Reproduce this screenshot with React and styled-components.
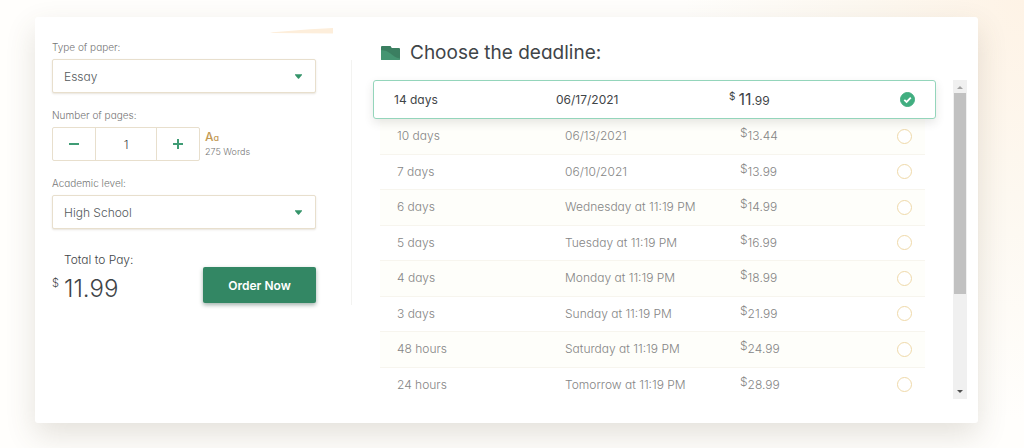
import React, { useState } from "react";
import styled, { createGlobalStyle, css } from "styled-components";

const GlobalStyle = createGlobalStyle`
  *, *::before, *::after { box-sizing: border-box; }
  body {
    margin: 0;
    min-height: 100vh;
    font-family: Inter, "Open Sans", sans-serif;
    font-feature-settings: "cv11" 1;
    font-weight: 300;
    color: #3f4548;
    background:
      radial-gradient(ellipse 340px 420px at 100% 0%, #fef3e6 0%, rgba(252, 246, 236, 0.7) 50%, rgba(253, 250, 244, 0) 100%),
      #fffefc;
  }
  button, input, select { font: inherit; font-feature-settings: inherit; color: inherit; }
`;

const Page = styled.main`
  padding: 17px 46px 25px 35px;
`;

const Card = styled.section`
  display: flex;
  align-items: flex-start;
  padding: 11px 11px 24px 17px;
  border-radius: 3px;
  background: #fff;
  box-shadow: 0 12px 30px rgba(90, 75, 50, 0.16);
`;

const OrderForm = styled.form`
  display: flex;
  flex: 0 0 282px;
  flex-direction: column;
`;

const Ribbon = styled.svg`
  display: block;
  align-self: flex-end;
  width: 64px;
  height: 6px;
`;

const Fields = styled.div`
  display: flex;
  flex-direction: column;
  gap: 15px;
  width: 264px;
  margin-top: 6px;
`;

const Field = styled.div`
  display: flex;
  flex-direction: column;
  gap: 5px;
`;

const FieldLabel = styled.label`
  font-size: 10px;
  line-height: 14px;
  color: #757575;
`;

const SelectBox = styled.div`
  display: grid;
  align-items: center;
  & > * { grid-area: 1 / 1; }
`;

const Select = styled.select`
  appearance: none;
  width: 100%;
  height: 34px;
  padding: 0 30px 0 11px;
  border: 1px solid #e8dfcd;
  border-radius: 2px;
  background: #fff;
  box-shadow: 0 1px 2px rgba(110, 85, 50, 0.16);
  font-size: 12px;
  color: #555a5c;
`;

const Caret = styled.svg`
  justify-self: end;
  width: 7px;
  height: 5px;
  margin-right: 14px;
  fill: #35946a;
  pointer-events: none;
`;

const PagesRow = styled.div`
  display: flex;
  gap: 5px;
`;

const Stepper = styled.div`
  display: flex;
  width: 148px;
  height: 34px;
  border: 1px solid #e8dfcd;
  border-radius: 2px;
`;

const StepButton = styled.button`
  display: grid;
  flex: 0 0 42px;
  place-items: center;
  padding: 0;
  border: 0;
  background: none;
  cursor: pointer;
  svg { width: 10px; height: 10px; fill: #3f9c75; }
`;

const PageCount = styled.input`
  flex: 1;
  min-width: 0;
  padding: 0;
  border: solid #e8dfcd;
  border-width: 0 1px;
  background: none;
  font-size: 12px;
  text-align: center;
`;

const WordCount = styled.div`
  padding-top: 3px;
  font-size: 9px;
  line-height: 14px;
  color: #757575;
`;

const TypeMark = styled.div`
  font-size: 12px;
  font-weight: 500;
  color: #c39a55;
  small { font-size: 9px; }
`;

const Checkout = styled.div`
  display: flex;
  align-items: flex-end;
  justify-content: space-between;
  width: 264px;
  margin-top: 22px;
`;

const TotalLabel = styled.div`
  padding: 0 0 6px 12px;
  font-size: 12px;
  line-height: 18px;
`;

const Total = styled.div`
  display: flex;
  gap: 5px;
  font-size: 24px;
  line-height: 28px;
  sup { font-size: 11px; line-height: 16px; }
`;

const OrderButton = styled.button`
  width: 113px;
  height: 36px;
  border: 0;
  border-radius: 2px;
  background: #338764;
  box-shadow: 0 2px 4px rgba(20, 60, 45, 0.4);
  color: #fff;
  font-size: 12px;
  font-weight: 600;
  cursor: pointer;
`;

const Divider = styled.div`
  flex: 0 0 1px;
  height: 245px;
  margin: 32px 21px 0 17px;
  background: #f3f3f1;
`;

const DeadlinePanel = styled.section`
  flex: 1;
  min-width: 0;
  padding-top: 12px;
`;

const Heading = styled.h2`
  display: flex;
  align-items: center;
  gap: 10px;
  margin: 0 0 14px 8px;
  font-size: 19px;
  line-height: 26px;
  font-weight: 400;
  svg { width: 19px; height: 14px; }
`;

const ScrollArea = styled.div`
  display: flex;
  gap: 17px;
  height: 319px;
`;

const DeadlineTable = styled.table`
  display: block;
  flex: 1;
  tbody {
    display: flex;
    flex-direction: column;
    height: 322px;
  }
`;

const DeadlineRow = styled.tr`
  display: grid;
  flex: 1;
  grid-template-columns: 168fr 175fr 172fr;
  align-items: center;
  margin: 0 11px 0 7px;
  padding: 0 13px 0 17px;
  border-bottom: 1px solid #f7f5ee;
  background: ${(p) => (p.$tinted ? "#fefefa" : "#fff")};
  font-size: 12px;
  line-height: 18px;
  color: #858585;
  &:last-child { border-bottom: 0; }

  ${(p) =>
    p.$selected &&
    css`
      z-index: 1;
      flex: 0 0 39px;
      grid-template-columns: 162fr 173fr 186fr;
      padding: 0 20px;
      margin: 0;
      border: 1px solid #94d5bb;
      border-radius: 3px;
      background: #fff;
      box-shadow: 0 4px 10px rgba(60, 60, 50, 0.12);
      color: #3f4548;
      font-weight: 400;
      &:last-child { border-bottom: 1px solid #94d5bb; }
    `}
`;

const Cell = styled.td`
  padding: 0;
  white-space: nowrap;
`;

const PriceCell = styled(Cell)`
  display: flex;
  align-items: center;
  justify-content: space-between;
`;

const Price = styled.span`
  display: flex;
  align-items: baseline;
  gap: ${(p) => (p.$selected ? "3px" : "0")};
  sup {
    align-self: flex-start;
    font-size: ${(p) => (p.$selected ? "10px" : "12px")};
    line-height: 12px;
  }
  b { font-size: ${(p) => (p.$selected ? "16px" : "12px")}; font-weight: inherit; }
`;

const Radio = styled.input`
  appearance: none;
  width: 15px;
  height: 15px;
  margin: 0;
  border: 1px solid #efd9a9;
  border-radius: 50%;
  background: #fff;
  cursor: pointer;
  &:checked {
    border-color: #41ae80;
    background: #41ae80 url("data:image/svg+xml,%3Csvg xmlns='http://www.w3.org/2000/svg' viewBox='0 0 13 13'%3E%3Cpath d='M3.3 6.8l2.3 2.2 4.2-4.3' fill='none' stroke='white' stroke-width='1.8'/%3E%3C/svg%3E") center / 13px 13px no-repeat;
  }
`;

const ScrollTrack = styled.div`
  display: flex;
  flex: 0 0 14px;
  flex-direction: column;
  align-items: center;
  background: #f0f0f0;
`;

const ScrollArrow = styled.svg`
  flex: 0 0 13px;
  width: 14px;
  height: 13px;
  fill: ${(p) => p.$tone};
`;

const ScrollThumb = styled.div`
  flex: 0 0 201px;
  width: 12px;
  margin-bottom: auto;
  background: #c1c1c1;
`;

const DEADLINES = [
  ["14 days", "06/17/2021", "11", ".99"],
  ["10 days", "06/13/2021", "13", ".44"],
  ["7 days", "06/10/2021", "13", ".99"],
  ["6 days", "Wednesday at 11:19 PM", "14", ".99"],
  ["5 days", "Tuesday at 11:19 PM", "16", ".99"],
  ["4 days", "Monday at 11:19 PM", "18", ".99"],
  ["3 days", "Sunday at 11:19 PM", "21", ".99"],
  ["48 hours", "Saturday at 11:19 PM", "24", ".99"],
  ["24 hours", "Tomorrow at 11:19 PM", "28", ".99"],
];

function SelectField({ id, label, options }) {
  return (
    <Field>
      <FieldLabel htmlFor={id}>{label}</FieldLabel>
      <SelectBox>
        <Select id={id}>
          {options.map((option) => (
            <option key={option}>{option}</option>
          ))}
        </Select>
        <Caret viewBox="0 0 7 5" aria-hidden="true">
          <path d="M0 .3h7v.7L3.9 4.7h-.8L0 1z" />
        </Caret>
      </SelectBox>
    </Field>
  );
}

export default function App() {
  const [pages, setPages] = useState(1);
  const [selected, setSelected] = useState(0);
  const [, , whole, cents] = DEADLINES[selected];
  const total = (Number(whole + cents) * pages).toFixed(2);

  return (
    <Page>
      <GlobalStyle />
      <Card>
        <OrderForm onSubmit={(e) => e.preventDefault()}>
          <Ribbon viewBox="0 0 64 6" aria-hidden="true">
            <path d="M0 4.500 40 1.300 63 0v5.500L3 5z" fill="#fdeedb" />
          </Ribbon>
          <Fields>
            <SelectField id="paper" label="Type of paper:" options={["Essay"]} />
            <Field>
              <FieldLabel htmlFor="pages">Number of pages:</FieldLabel>
              <PagesRow>
                <Stepper>
                  <StepButton
                    type="button"
                    aria-label="Fewer pages"
                    onClick={() => setPages(Math.max(1, pages - 1))}
                  >
                    <svg viewBox="0 0 10 10"><path d="M0 4h10v2H0z" /></svg>
                  </StepButton>
                  <PageCount id="pages" value={pages} readOnly />
                  <StepButton
                    type="button"
                    aria-label="More pages"
                    onClick={() => setPages(pages + 1)}
                  >
                    <svg viewBox="0 0 10 10">
                      <path d="M0 4h4V0h2v4h4v2H6v4H4V6H0z" />
                    </svg>
                  </StepButton>
                </Stepper>
                <WordCount>
                  <TypeMark>A<small>a</small></TypeMark>
                  {275 * pages} Words
                </WordCount>
              </PagesRow>
            </Field>
            <SelectField id="level" label="Academic level:" options={["High School"]} />
          </Fields>
          <Checkout>
            <div>
              <TotalLabel>Total to Pay:</TotalLabel>
              <Total><sup>$</sup>{total}</Total>
            </div>
            <OrderButton type="submit">Order Now</OrderButton>
          </Checkout>
        </OrderForm>
        <Divider />
        <DeadlinePanel>
          <Heading>
            <svg viewBox="0 0 19 14" aria-hidden="true">
              <path d="M1 0h8.500l1.300 2H18a1 1 0 0 1 1 1v10a1 1 0 0 1-1 1H1a1 1 0 0 1-1-1V1a1 1 0 0 1 1-1z" fill="#3b7f61" />
              <path d="M0 4c4 .3 7 1.500 9.500 3.500S14.500 12 19 12.500V13a1 1 0 0 1-1 1H1a1 1 0 0 1-1-1z" fill="#459572" />
            </svg>
            Choose the deadline:
          </Heading>
          <ScrollArea>
            <DeadlineTable>
              <tbody>
                {DEADLINES.map(([time, date, dollars, rest], i) => (
                  <DeadlineRow key={time} $selected={i === selected} $tinted={i % 2 === 1}>
                    <Cell><label htmlFor={`deadline-${i}`}>{time}</label></Cell>
                    <Cell>{date}</Cell>
                    <PriceCell>
                      <Price $selected={i === selected}>
                        <sup>$</sup>
                        <span><b>{dollars}</b>{rest}</span>
                      </Price>
                      <Radio
                        type="radio"
                        name="deadline"
                        id={`deadline-${i}`}
                        checked={i === selected}
                        onChange={() => setSelected(i)}
                      />
                    </PriceCell>
                  </DeadlineRow>
                ))}
              </tbody>
            </DeadlineTable>
            <ScrollTrack aria-hidden="true">
              <ScrollArrow viewBox="0 0 14 13" $tone="#a3a3a3"><path d="M4 9l3-3 3 3z" /></ScrollArrow>
              <ScrollThumb />
              <ScrollArrow viewBox="0 0 14 13" $tone="#505050"><path d="M4 4l3 3 3-3z" /></ScrollArrow>
            </ScrollTrack>
          </ScrollArea>
        </DeadlinePanel>
      </Card>
    </Page>
  );
}
